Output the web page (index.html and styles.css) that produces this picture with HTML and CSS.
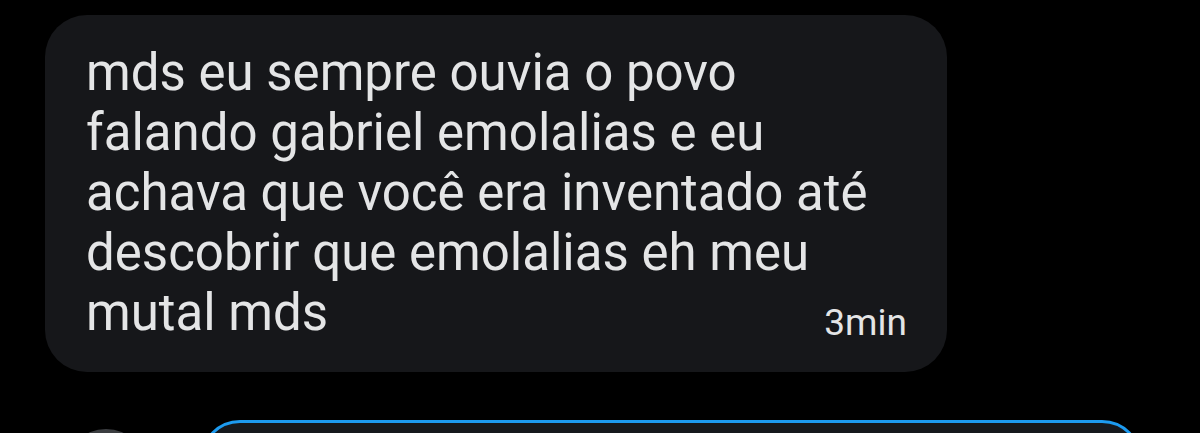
FILE: index.html
```html
<html>
  <head>
    <meta name="viewport" content="width=device-width, initial-scale=1" />
    <link rel="stylesheet" href="styles.css">
  </head>
  <body>
    <div class="chat">
      <div class="bubble">
        <p class="bubble-text">mds eu sempre ouvia o povo<br>falando gabriel emolalias e eu<br>achava que você era inventado até<br>descobrir que emolalias eh meu<br>mutal mds</p>
        <span class="bubble-time">3min</span>
      </div>

      <div class="composer">
        <div class="avatar"></div>
        <div class="composer-input"></div>
      </div>
    </div>
  </body>
</html>
```

FILE: styles.css
```css
body {
  margin: 0;
  background: #000;
  font-family: Roboto, "Noto Sans", sans-serif;
  overflow: hidden;
}

.chat {
  padding: 15px 0 0 45px;
}

/* message and timestamp share one cell: text top-left, time bottom-right */
.bubble {
  display: grid;
  grid-template-areas: "msg";
  width: 902px;
  height: 357px;
  box-sizing: border-box;
  padding: 28px 40px 32px 41px;
  background: #16171a;
  border-radius: 42px;
}

.bubble-text {
  grid-area: msg;
  margin: 0;
  color: #e4e5e6;
  font-size: 51px;
  line-height: 60px;
  white-space: nowrap;
}

.bubble-time {
  grid-area: msg;
  justify-self: end;
  align-self: end;
  color: #e4e5e6;
  font-size: 37px;
  line-height: 40px;
}

.composer {
  display: flex;
  gap: 53px;
  margin-top: 48px;
  margin-left: 20px;
}

.avatar {
  flex: none;
  width: 82px;
  height: 82px;
  margin-top: 9px;
  border-radius: 50%;
  background: #3b3d40;
}

.composer-input {
  flex: none;
  width: 942px;
  height: 80px;
  box-sizing: border-box;
  border: 3px solid #1d9bf0;
  border-radius: 44px;
  background: #16181c;
}
```
